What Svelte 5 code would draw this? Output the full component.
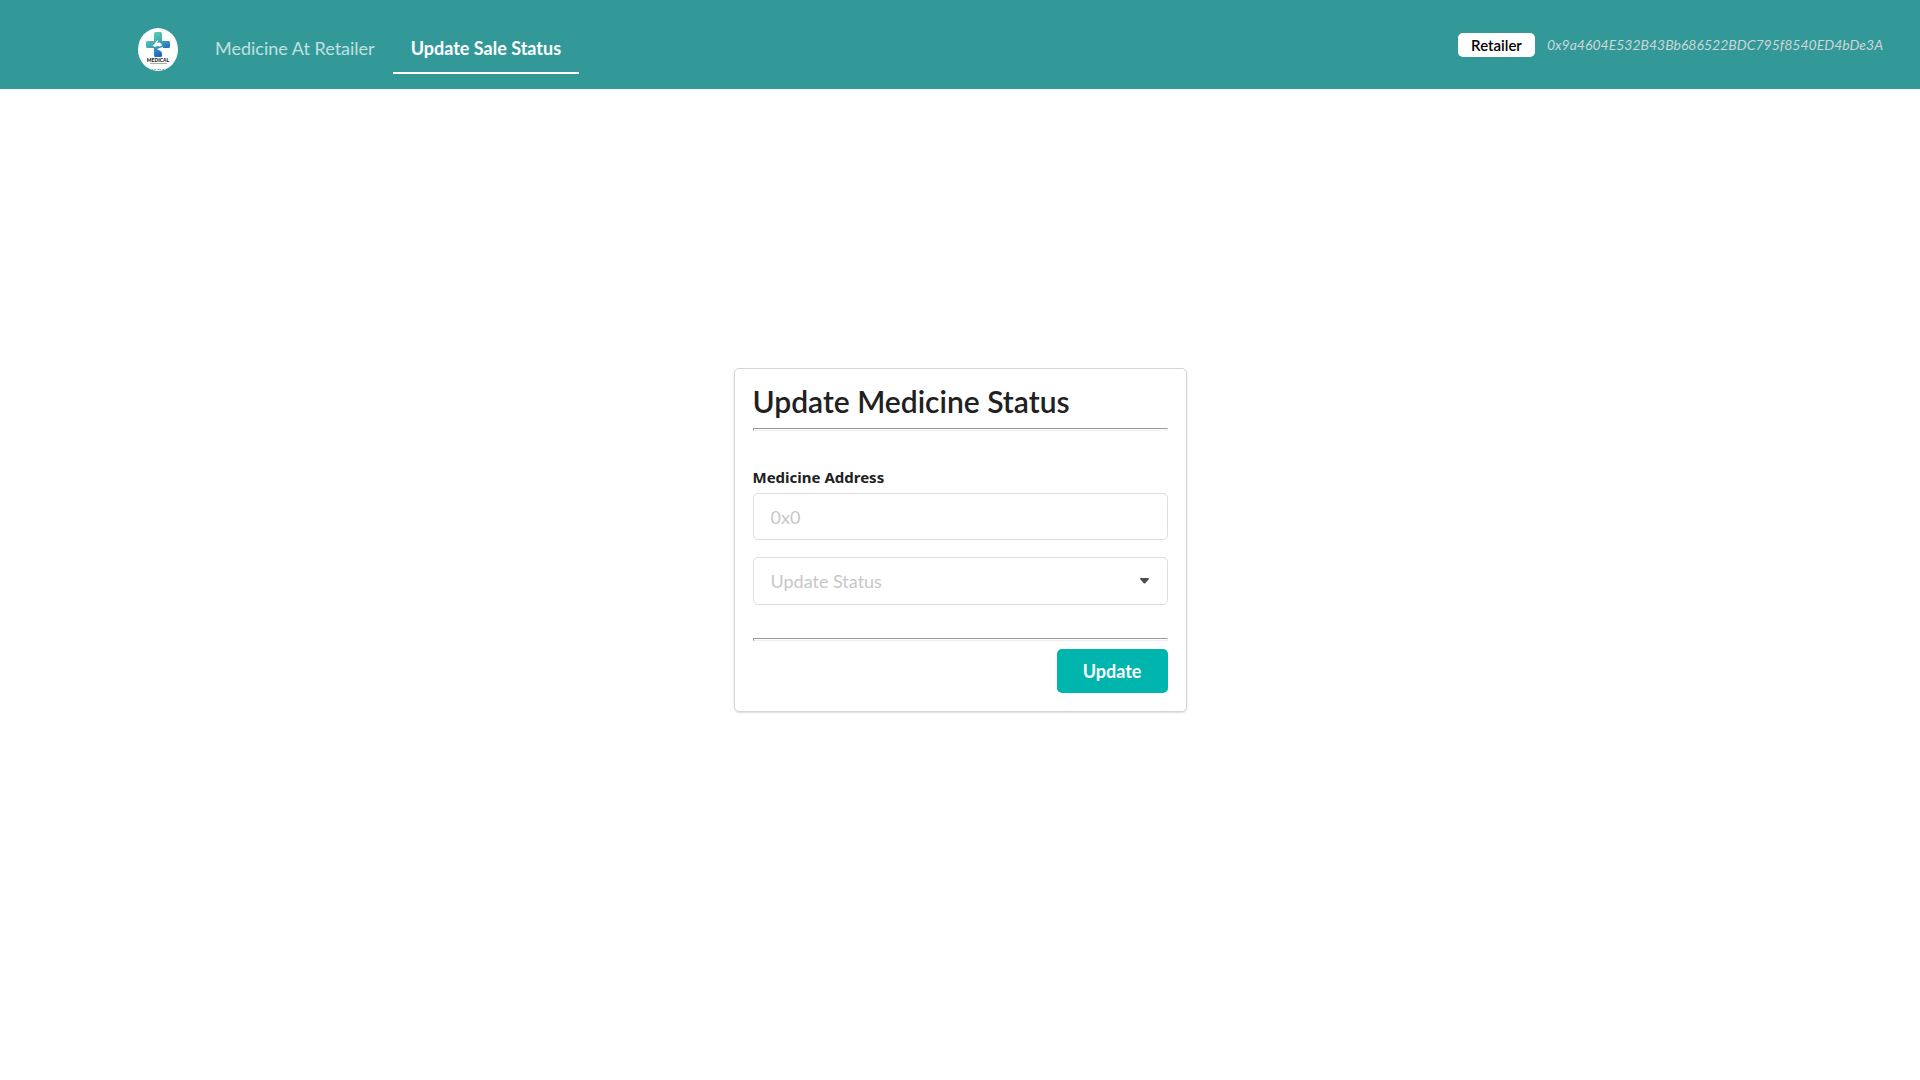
<script lang="ts">
    let address: string = "";
    let status: string = "";

    const account = "0x9a4604E532B43Bb686522BDC795f8540ED4bDe3A";

    const links = [
        { label: "Medicine At Retailer", href: "#medicines", active: false },
        { label: "Update Sale Status", href: "#update", active: true },
    ];

    const statuses = ["Not Found", "At Retailer", "Sold", "Expired", "Damaged"];

    // Clear the form once the update is sent
    function updateStatus() {
        if (address && status) {
            console.log("Updating", address, status);
            address = "";
            status = "";
        }
    }
</script>

<div class="page">
    <header>
        <nav>
            <a class="logo" href="#home" aria-label="Home">
                <svg viewBox="0 0 40 43" aria-hidden="true">
                    <defs>
                        <linearGradient id="cross" x1="0.2" y1="0" x2="0.8" y2="1">
                            <stop offset="0.1" stop-color="#5ccbaa" />
                            <stop offset="0.5" stop-color="#3c9fba" />
                            <stop offset="0.85" stop-color="#2462c4" />
                        </linearGradient>
                        <clipPath id="round"><ellipse cx="20" cy="21.5" rx="20" ry="21.5" /></clipPath>
                    </defs>
                    <ellipse cx="20" cy="21.5" rx="20" ry="21.5" fill="#fdfefe" />
                    <path fill="url(#cross)" d="M17.500 4h5q1.500 0 1.500 1.500V13h6.500q1.500 0 1.500 1.500v4q0 1.500-1.500 1.500H24v7.500q0 1.500-1.500 1.500h-5q-1.500 0-1.500-1.500V20H9.500Q8 20 8 18.500v-4Q8 13 9.500 13H16V5.500Q16 4 17.500 4z" />
                    <path fill="#fff" d="M14.500 17.500q2-1 3-3l2-2.500.5 1-.7 2 2.200-.5 2 1.500.5 1.500-2 1-2.500-.5-2.500 1zM19 21.500l2-1.500 2.500-.5 1-1 .5 1-.5 3-.5 2-.7-.2-.3-2-.8 1.500-.7-1.500z" />
                    <text x="20" y="34" text-anchor="middle" class="brand">MEDICAL</text>
                    <path stroke="#888" stroke-width="0.7" d="M12 35.500h17" />
                    <path clip-path="url(#round)" stroke="#9aa3a3" stroke-width="0.8" stroke-dasharray="4 1 2 1" d="M11 41.500h19" />
                </svg>
            </a>
            {#each links as link}
                <a class="tab" class:active={link.active} href={link.href}>{link.label}</a>
            {/each}
        </nav>
        <div class="account">
            <span class="role">Retailer</span>
            <i>{account}</i>
        </div>
    </header>

    <main>
        <form on:submit|preventDefault={updateStatus}>
            <h1>Update Medicine Status</h1>
            <hr />
            <div class="fields">
                <div>
                    <label for="address">Medicine Address</label>
                    <input id="address" type="text" bind:value={address} placeholder="0x0" />
                </div>
                <div class="dropdown">
                    <select aria-label="Update Status" class:empty={!status} bind:value={status}>
                        <option value="" disabled hidden>Update Status</option>
                        {#each statuses as item}
                            <option value={item}>{item}</option>
                        {/each}
                    </select>
                    <svg viewBox="0 0 9 6" aria-hidden="true"><path d="M1 0h7q1 0 1 1L5.500 5q-1 1-2 0L0 1q0-1 1-1z" /></svg>
                </div>
            </div>
            <hr />
            <button type="submit">Update</button>
        </form>
    </main>
</div>

<style>
    .page {
        display: flex;
        flex-direction: column;
        min-height: 100vh;
        font-family: Lato, "Liberation Sans", sans-serif;
        color: #212121;
    }

    header {
        display: flex;
        justify-content: space-between;
        box-sizing: border-box;
        min-height: 89px;
        padding: 24px 37px 14px 138px;
        background: #339998;
    }

    nav {
        display: flex;
    }

    a {
        text-decoration: none;
    }

    .logo {
        margin: 4px 19px 0 0;
    }

    .logo svg {
        display: block;
        width: 40px;
        height: 43px;
    }

    .brand {
        font: 900 5px Lato, sans-serif;
        fill: #222;
    }

    .tab {
        box-sizing: border-box;
        height: 50px;
        padding: 13px 18px;
        border-bottom: 2px solid transparent;
        font-size: 18px;
        line-height: 22px;
        color: #c1e0e0;
    }

    .tab.active {
        border-color: #fff;
        font-weight: 700;
        color: #fff;
    }

    .account {
        display: flex;
        align-items: flex-start;
        gap: 12px;
        padding-top: 9px;
        font-size: 14px;
        line-height: 24px;
        color: #ccd6d6;
    }

    .role {
        padding: 0 13px;
        border-radius: 5px;
        background: #fff;
        font-size: 15px;
        font-weight: 600;
        color: #000;
    }

    main {
        display: flex;
        flex: 1;
        align-items: center;
        justify-content: center;
        padding-bottom: 89px;
    }

    form {
        box-sizing: border-box;
        width: 453px;
        max-width: 100%;
        padding: 18px;
        border: 1px solid #d4d4d5;
        border-radius: 5px;
        box-shadow: 0 1px 2px rgba(34, 36, 38, 0.15);
    }

    h1 {
        margin: 0 0 13px;
        font-size: 30px;
        font-weight: 600;
        line-height: 28px;
    }

    hr {
        box-sizing: border-box;
        height: 3px;
        margin: 0;
        border: 1px solid #eee;
        border-top-color: #999;
        border-left-color: #999;
    }

    .fields {
        display: grid;
        gap: 17px;
        padding: 35px 0 33px;
    }

    label {
        display: block;
        margin-bottom: 5px;
        font-family: "Noto Sans", sans-serif;
        font-size: 15px;
        font-weight: 700;
        line-height: 22px;
    }

    input,
    select {
        display: block;
        box-sizing: border-box;
        width: 100%;
        height: 47px;
        padding: 0 17px;
        border: 1px solid #dededf;
        border-radius: 5px;
        background: #fff;
        font-family: inherit;
        font-size: 18px;
        color: #212121;
        appearance: none;
    }

    select {
        height: 48px;
    }

    input::placeholder,
    select.empty {
        color: #c7c7c7;
    }

    .dropdown {
        position: relative;
    }

    .dropdown svg {
        position: absolute;
        top: 21px;
        right: 19px;
        width: 9px;
        height: 6px;
        fill: #4d4d4d;
        pointer-events: none;
    }

    button {
        display: block;
        height: 44px;
        margin: 8px 0 0 auto;
        padding: 0 26px;
        border: 0;
        border-radius: 5px;
        background: #00b5ad;
        font-family: inherit;
        font-size: 18px;
        font-weight: 700;
        color: #fff;
        cursor: pointer;
    }
</style>
